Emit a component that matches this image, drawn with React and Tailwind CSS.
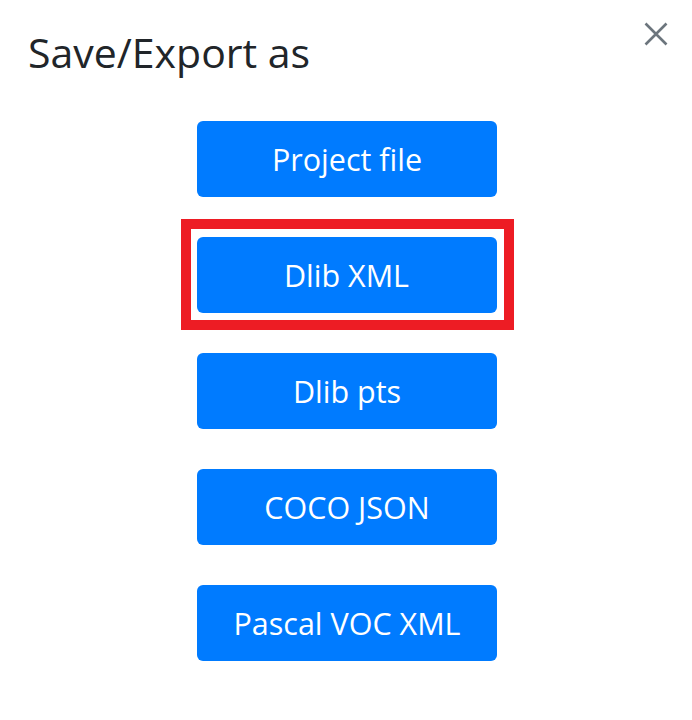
const OPTIONS = ['Project file', 'Dlib XML', 'Dlib pts', 'COCO JSON', 'Pascal VOC XML']

function ExportButton({ label }) {
  return (
    <button
      type="button"
      className="flex h-[76px] w-[300px] items-center justify-center rounded-[6px] bg-[#007bff] text-[30.5px] leading-none text-white"
    >
      {label}
    </button>
  )
}

export default function App() {
  return (
    <div
      className="h-[720px] w-[692px] bg-white text-[#212529]"
      style={{ fontFamily: '"Open Sans", "Noto Sans", sans-serif' }}
    >
      <div className="flex items-start justify-between pl-[28px] pr-[24px] pt-[28px]">
        <h1 className="text-[41px] leading-[48px] font-normal">Save/Export as</h1>
        <button type="button" className="-mt-[6px] text-[#6c757d]">
          <svg width="24" height="24" viewBox="0 0 24 24" fill="none" stroke="currentColor" strokeWidth="2.6">
            <path d="M1.5 1.5 L22.5 22.5 M22.5 1.5 L1.5 22.5" />
          </svg>
        </button>
      </div>

      <div className="mt-[45px] flex flex-col items-center gap-[40px] pl-[2px]">
        {OPTIONS.map((label, i) =>
          i === 1 ? (
            <div
              key={label}
              className="-mb-[17px] -mt-[18px] border-[10px] border-[#ed1c24] pb-[7px] pl-[6px] pr-[7px] pt-[8px]"
            >
              <ExportButton label={label} />
            </div>
          ) : (
            <ExportButton key={label} label={label} />
          ),
        )}
      </div>
    </div>
  )
}
